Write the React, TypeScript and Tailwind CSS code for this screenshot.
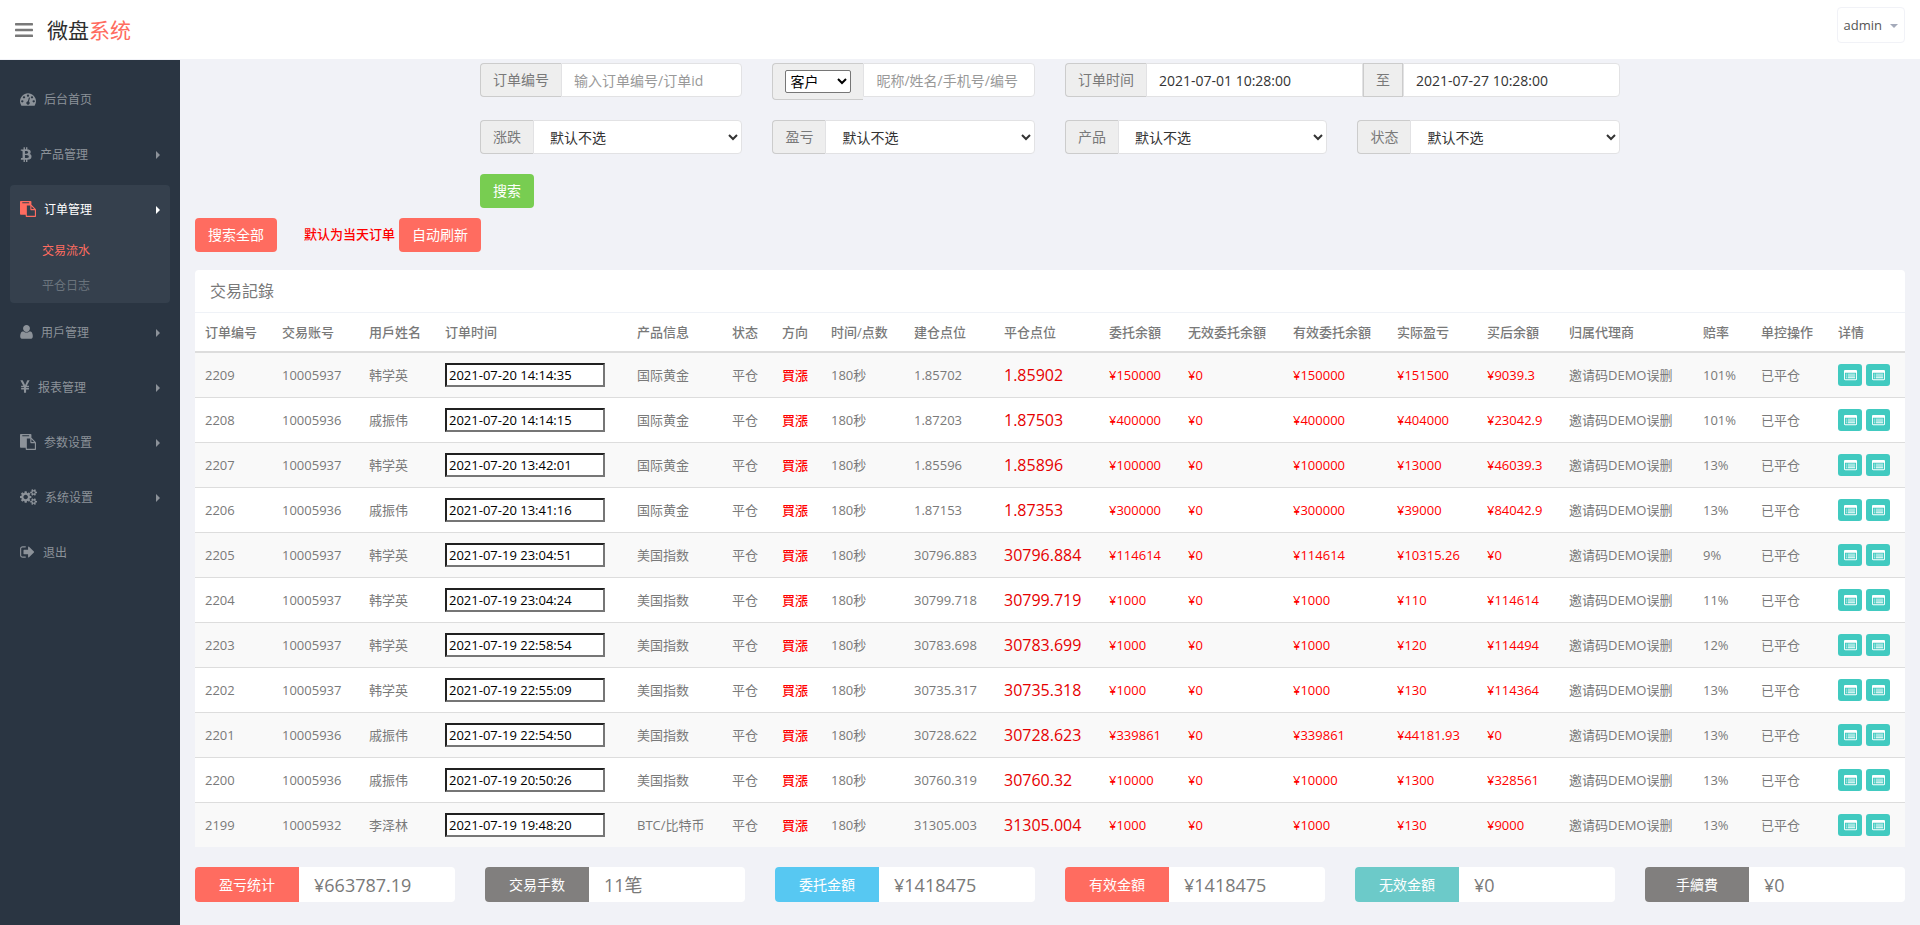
import { ReactNode } from "react";
import clsx from "clsx";

type IconProps = { className?: string };

function Glyph({ viewBox, d, className }: { viewBox: string; d: string; className?: string }) {
    return (
        <svg className={clsx("block fill-current", className)} viewBox={viewBox} aria-hidden="true">
            <path d={d} />
        </svg>
    );
}

function DashboardIcon({ className }: IconProps) {
    return (
        <Glyph
            className={className}
            viewBox="0 0 1792 1792"
            d="M384 1152q0-53-37.5-90.5t-90.5-37.5-90.5 37.5-37.5 90.5 37.5 90.5 90.5 37.5 90.5-37.5 37.5-90.5zm192-448q0-53-37.5-90.5t-90.5-37.5-90.5 37.5-37.5 90.5 37.5 90.5 90.5 37.5 90.5-37.5 37.5-90.5zm428 481l101-382q6-26-7.5-48.5t-38.5-29.5-48 6.5-30 39.5l-101 382q-60 5-107 43.5t-63 98.5q-20 77 20 146t117 89 146-20 89-117q16-60-6-117t-72-91zm660-33q0-53-37.5-90.5t-90.5-37.5-90.5 37.5-37.5 90.5 37.5 90.5 90.5 37.5 90.5-37.5 37.5-90.5zm-640-640q0-53-37.5-90.5t-90.5-37.5-90.5 37.5-37.5 90.5 37.5 90.5 90.5 37.5 90.5-37.5 37.5-90.5zm448 192q0-53-37.5-90.5t-90.5-37.5-90.5 37.5-37.5 90.5 37.5 90.5 90.5 37.5 90.5-37.5 37.5-90.5zm320 448q0 261-141 483-19 29-54 29h-1402q-35 0-54-29-141-221-141-483 0-182 71-348t191-286 286-191 348-71 348 71 286 191 191 286 71 348z"
        />
    );
}

function BtcIcon({ className }: IconProps) {
    return (
        <Glyph
            className={className}
            viewBox="0 0 1280 1792"
            d="M1167 640q18 182-131 258 117 28 175 103t45 214q-7 71-32.5 125t-64.5 89-97 58.5-121.5 34.5-145.5 15v255h-154v-251q-80 0-122-1v252h-154v-255q-18 0-54-.5t-55-.5h-200l31-183h111q50 0 58-51v-402h16q-6-1-16-1v-287q-13-68-89-68h-111v-164l212 1q64 0 97-1v-252h154v247q82-2 122-2v-245h154v252q79 7 140 22.5t113 45 82.5 78 36.5 114.5zm-215 545q0-36-15-64t-37-46-57.5-30.5-65.5-18.5-74-9-69-3-64.5 1-47.5 1v338q8 0 37 .5t48 .5 53-1.5 58.5-4 57-8.5 55.5-14 47.5-21 39.5-30 24.5-40 9.5-51zm-71-476q0-33-12.5-58.5t-30.5-42-48-28-55-16.5-61.5-8-58-2.5-54 1-39.5.5v307q5 0 34.5.5t46.5 0 50-2 55-5.5 51.5-11 48.5-18.5 37-27 27-38.5 9-51z"
        />
    );
}

function PasteIcon({ className }: IconProps) {
    return (
        <Glyph
            className={className}
            viewBox="0 0 1792 1792"
            d="M768 1664h896v-640h-416q-40 0-68-28t-28-68v-416h-384v1152zm256-1440v-64q0-13-9.5-22.5t-22.5-9.5h-704q-13 0-22.5 9.5t-9.5 22.5v64q0 13 9.5 22.5t22.5 9.5h704q13 0 22.5-9.5t9.5-22.5zm256 672h299l-299-299v299zm512 128v672q0 40-28 68t-68 28h-960q-40 0-68-28t-28-68v-160h-544q-40 0-68-28t-28-68v-1344q0-40 28-68t68-28h1088q40 0 68 28t28 68v328q21 13 36 28l408 408q28 28 48 76t20 88z"
        />
    );
}

function UserIcon({ className }: IconProps) {
    return (
        <Glyph
            className={className}
            viewBox="128 0 1408 1792"
            d="M1536 1399q0 120-73 189.5t-194 69.5h-874q-121 0-194-69.5t-73-189.5q0-53 3.5-103.5t14-109 26.5-108.5 43-97.5 62-81 85.5-53.5 111.5-20q9 0 42 21.5t74.5 48 108 48 133.5 21.5 133.5-21.5 108-48 74.5-48 42-21.5q61 0 111.5 20t85.5 53.5 62 81 43 97.5 26.5 108.5 14 109 3.5 103.5zm-320-893q0 159-112.5 271.5t-271.5 112.5-271.5-112.5-112.5-271.5 112.5-271.5 271.5-112.5 271.5 112.5 112.5 271.5z"
        />
    );
}

function YenIcon({ className }: IconProps) {
    return (
        <Glyph
            className={className}
            viewBox="382 0 1029 1792"
            d="M985.5 1536h-172q-13 0-22.5-9t-9.5-23v-330h-288q-13 0-22.5-9t-9.5-23v-103q0-13 9.5-22.5t22.5-9.5h288v-85h-288q-13 0-22.5-9t-9.5-23v-104q0-13 9.5-22.5t22.5-9.5h214l-321-578q-8-16 0-32 10-16 28-16h194q19 0 29 18l215 425q19 38 56 125 10-24 30.5-68t27.5-61l191-420q8-19 29-19h191q17 0 27 16 9 14 1 31l-313 579h215q13 0 22.5 9.5t9.5 22.5v104q0 14-9.5 23t-22.5 9h-290v85h290q13 0 22.5 9.5t9.5 22.5v103q0 14-9.5 23t-22.5 9h-290v330q0 13-9.5 22.5t-22.5 9.5z"
        />
    );
}

function CogsIcon({ className }: IconProps) {
    return (
        <Glyph
            className={className}
            viewBox="0 0 1920 1792"
            d="M896 896q0-106-75-181t-181-75-181 75-75 181 75 181 181 75 181-75 75-181zm768 512q0-52-38-90t-90-38-90 38-38 90q0 53 37.5 90.5t90.5 37.5 90.5-37.5 37.5-90.5zm0-1024q0-52-38-90t-90-38-90 38-38 90q0 53 37.5 90.5t90.5 37.5 90.5-37.5 37.5-90.5zm-384 421v185q0 10-7 19.5t-16 10.5l-155 24q-11 35-32 76 34 48 90 115 7 11 7 20 0 12-7 19-23 30-82.5 89.5t-78.5 59.5q-11 0-21-7l-115-90q-37 19-77 31-11 108-23 155-7 24-30 24h-186q-11 0-20-7.5t-10-17.5l-23-153q-34-10-75-31l-118 89q-7 7-20 7-11 0-21-8-144-133-144-160 0-9 7-19 10-14 41-53t47-61q-23-44-35-82l-152-24q-10-1-17-9.5t-7-19.5v-185q0-10 7-19.5t16-10.5l155-24q11-35 32-76-34-48-90-115-7-11-7-20 0-12 7-20 22-30 82-89t79-59q11 0 21 7l115 90q34-18 77-32 11-108 23-154 7-24 30-24h186q11 0 20 7.5t10 17.5l23 153q34 10 75 31l118-89q8-7 20-7 11 0 21 8 144 133 144 160 0 8-7 19-12 16-42 54t-45 60q23 48 34 82l152 23q10 2 17 10.5t7 19.5zm640 533v140q0 16-149 31-12 27-30 52 51 113 51 138 0 4-4 7-122 71-124 71-8 0-46-47t-52-68q-20 2-30 2t-30-2q-14 21-52 68t-46 47q-2 0-124-71-4-3-4-7 0-25 51-138-18-25-30-52-149-15-149-31v-140q0-16 149-31 13-29 30-52-51-113-51-138 0-4 4-7 4-2 35-20t59-34 30-16q8 0 46 46.5t52 67.5q20-2 30-2t30 2q51-71 92-112l6-2q4 0 124 70 4 3 4 7 0 25-51 138 17 23 30 52 149 15 149 31zm0-1024v140q0 16-149 31-12 27-30 52 51 113 51 138 0 4-4 7-122 71-124 71-8 0-46-47t-52-68q-20 2-30 2t-30-2q-14 21-52 68t-46 47q-2 0-124-71-4-3-4-7 0-25 51-138-18-25-30-52-149-15-149-31v-140q0-16 149-31 13-29 30-52-51-113-51-138 0-4 4-7 4-2 35-20t59-34 30-16q8 0 46 46.5t52 67.5q20-2 30-2t30 2q51-71 92-112l6-2q4 0 124 70 4 3 4 7 0 25-51 138 17 23 30 52 149 15 149 31z"
        />
    );
}

function SignOutIcon({ className }: IconProps) {
    return (
        <Glyph
            className={className}
            viewBox="64 0 1664 1792"
            d="M704 1440q0 4 1 20t.5 26.5-3 23.5-10 19.5-20.5 6.5h-320q-119 0-203.5-84.5t-84.5-203.5v-704q0-119 84.5-203.5t203.5-84.5h320q13 0 22.5 9.5t9.5 22.5q0 4 1 20t.5 26.5-3 23.5-10 19.5-20.5 6.5h-320q-66 0-113 47t-47 113v704q0 66 47 113t113 47h312l11.5 1 11.5 3 8 5.5 7 9 2 13.5zm928-544q0 26-19 45l-544 544q-19 19-45 19t-45-19-19-45v-288h-448q-26 0-45-19t-19-45v-384q0-26 19-45t45-19h448v-288q0-26 19-45t45-19 45 19l544 544q19 19 19 45z"
        />
    );
}

function ListIcon({ className }: IconProps) {
    return (
        <Glyph
            className={className}
            viewBox="0 0 1792 1792"
            d="M384 1184v64q0 13-9.5 22.5t-22.5 9.5h-64q-13 0-22.5-9.5t-9.5-22.5v-64q0-13 9.5-22.5t22.5-9.5h64q13 0 22.5 9.5t9.5 22.5zm0-256v64q0 13-9.5 22.5t-22.5 9.5h-64q-13 0-22.5-9.5t-9.5-22.5v-64q0-13 9.5-22.5t22.5-9.5h64q13 0 22.5 9.5t9.5 22.5zm0-256v64q0 13-9.5 22.5t-22.5 9.5h-64q-13 0-22.5-9.5t-9.5-22.5v-64q0-13 9.5-22.5t22.5-9.5h64q13 0 22.5 9.5t9.5 22.5zm1152 512v64q0 13-9.5 22.5t-22.5 9.5h-960q-13 0-22.5-9.5t-9.5-22.5v-64q0-13 9.5-22.5t22.5-9.5h960q13 0 22.5 9.5t9.5 22.5zm0-256v64q0 13-9.5 22.5t-22.5 9.5h-960q-13 0-22.5-9.5t-9.5-22.5v-64q0-13 9.5-22.5t22.5-9.5h960q13 0 22.5 9.5t9.5 22.5zm0-256v64q0 13-9.5 22.5t-22.5 9.5h-960q-13 0-22.5-9.5t-9.5-22.5v-64q0-13 9.5-22.5t22.5-9.5h960q13 0 22.5 9.5t9.5 22.5zm128 704v-832q0-13-9.5-22.5t-22.5-9.5h-1472q-13 0-22.5 9.5t-9.5 22.5v832q0 13 9.5 22.5t22.5 9.5h1472q13 0 22.5-9.5t9.5-22.5zm128-1088v1088q0 66-47 113t-113 47h-1472q-66 0-113-47t-47-113v-1088q0-66 47-113t113-47h1472q66 0 113 47t47 113z"
        />
    );
}

function Header() {
    return (
        <header className="flex h-[60px] items-center border-b border-[#f1f2f7] bg-white px-[15px]">
            <button type="button" aria-label="菜单" className="text-[#797979]">
                <svg className="block h-[14px] w-[18px] fill-current" viewBox="0 0 18 14" aria-hidden="true">
                    <rect width="18" height="2.4" rx="0.6" />
                    <rect y="5.8" width="18" height="2.4" rx="0.6" />
                    <rect y="11.6" width="18" height="2.4" rx="0.6" />
                </svg>
            </button>
            <a href="#" className="ml-[14px] text-[21px] leading-7 text-[#2e2e2e]">
                微盘<span className="text-[#ff6c60]">系统</span>
            </a>
            <button
                type="button"
                className="mb-2.5 ml-auto flex h-9 items-center gap-2 rounded border border-[#f1f2f7] px-1.5 pt-0.5 text-[13px] text-[#555]"
            >
                admin
                <svg className="block h-1 w-2 fill-[#a4aaba]" viewBox="0 0 8 4" aria-hidden="true">
                    <path d="M0 0h8L4 4z" />
                </svg>
            </button>
        </header>
    );
}

function MenuItem({
    icon,
    label,
    arrow = true,
    active = false,
}: {
    icon: ReactNode;
    label: string;
    arrow?: boolean;
    active?: boolean;
}) {
    return (
        <a href="#" className={clsx("flex h-[50px] items-center px-2.5", active ? "text-white" : "text-[#8c9299]")}>
            <span className={clsx("mb-0.5 mr-2", active && "text-[#ff6c60]")}>{icon}</span>
            {label}
            {arrow && (
                <svg className="ml-auto block h-2 w-1 fill-current" viewBox="0 0 4 8" aria-hidden="true">
                    <path d="M0 0l4 4-4 4z" />
                </svg>
            )}
        </a>
    );
}

function Sidebar() {
    return (
        <nav className="flex w-[180px] shrink-0 flex-col gap-[5px] bg-[#2a3542] px-2.5 pt-[15px] text-xs">
            <MenuItem icon={<DashboardIcon className="h-4 w-4" />} label="后台首页" arrow={false} />
            <MenuItem icon={<BtcIcon className="h-4 w-3" />} label="产品管理" />
            <div className="rounded bg-[#35404d]">
                <MenuItem icon={<PasteIcon className="h-4 w-4" />} label="订单管理" active />
                <ul className="-mt-0.5 pl-8 leading-[35px]">
                    <li>
                        <a href="#" className="block text-[#ff6c60]">交易流水</a>
                    </li>
                    <li>
                        <a href="#" className="block text-[#6b747d]">平仓日志</a>
                    </li>
                </ul>
            </div>
            <MenuItem icon={<UserIcon className="h-4 w-[13px]" />} label="用戶管理" />
            <MenuItem icon={<YenIcon className="h-4 w-2.5" />} label="报表管理" />
            <MenuItem icon={<PasteIcon className="h-4 w-4" />} label="参数设置" />
            <MenuItem icon={<CogsIcon className="h-4 w-[17px]" />} label="系统设置" />
            <MenuItem icon={<SignOutIcon className="h-4 w-[15px]" />} label="退出" arrow={false} />
        </nav>
    );
}

const addon = "flex h-[34px] shrink-0 items-center rounded-l border border-r-0 border-[#ccc] bg-[#eee] px-3 text-[#797979]";
const control = "h-[34px] min-w-0 flex-1 border border-[#e2e2e4] bg-white text-[#333] placeholder:text-[#999]";

function SelectGroup({ id, label }: { id: string; label: string }) {
    return (
        <div className="flex">
            <label htmlFor={id} className={addon}>{label}</label>
            <select id={id} className={clsx(control, "rounded-r pl-3 pr-1")}>
                <option>默认不选</option>
            </select>
        </div>
    );
}

function SearchForm() {
    return (
        <form className="mx-auto w-2/3 text-sm">
            <div className="grid grid-cols-4 gap-x-[30px]">
                <div className="flex h-[57px] items-start">
                    <label htmlFor="oid" className={addon}>订单编号</label>
                    <input id="oid" className={clsx(control, "rounded-r px-3")} placeholder="输入订单编号/订单id" />
                </div>
                <div className="flex items-start">
                    <div className="flex h-[37px] shrink-0 items-center rounded-l border border-r-0 border-[#ccc] bg-[#eee] px-3">
                        <select aria-label="用户类型" className="h-[23px] w-[66px] rounded-xs border border-[#767676] bg-white text-black">
                            <option>客户</option>
                        </select>
                    </div>
                    <input
                        aria-label="用户"
                        className={clsx(control, "rounded-r px-3")}
                        placeholder="昵称/姓名/手机号/编号"
                    />
                </div>
                <div className="col-span-2 flex items-start">
                    <label htmlFor="start" className={addon}>订单时间</label>
                    <input id="start" className={clsx(control, "px-3")} defaultValue="2021-07-01 10:28:00" />
                    <label
                        htmlFor="end"
                        className="flex h-[34px] shrink-0 items-center border border-[#ccc] bg-[#eee] px-3 text-[#797979]"
                    >
                        至
                    </label>
                    <input id="end" className={clsx(control, "rounded-r px-3")} defaultValue="2021-07-27 10:28:00" />
                </div>
                <SelectGroup id="trend" label="涨跌" />
                <SelectGroup id="profit" label="盈亏" />
                <SelectGroup id="product" label="产品" />
                <SelectGroup id="status" label="状态" />
            </div>
            <button type="button" className="mt-5 block h-[34px] rounded bg-[#78cd51] px-[13px] text-white">
                搜索
            </button>
        </form>
    );
}

const columns = [
    { title: "订单编号", width: "w-[77px]" },
    { title: "交易账号", width: "w-[87px]" },
    { title: "用戶姓名", width: "w-[76px]" },
    { title: "订单时间", width: "w-[192px]" },
    { title: "产品信息", width: "w-[95px]" },
    { title: "状态", width: "w-[50px]" },
    { title: "方向", width: "w-[49px]" },
    { title: "时间/点数", width: "w-[83px]" },
    { title: "建仓点位", width: "w-[90px]" },
    { title: "平仓点位", width: "w-[105px]" },
    { title: "委托余額", width: "w-[79px]" },
    { title: "无效委托余額", width: "w-[105px]" },
    { title: "有效委托余額", width: "w-[104px]" },
    { title: "实际盈亏", width: "w-[90px]" },
    { title: "买后余額", width: "w-[82px]" },
    { title: "归属代理商", width: "w-[134px]" },
    { title: "赔率", width: "w-[58px]" },
    { title: "单控操作", width: "w-[77px]" },
    { title: "详情", width: "w-[77px]" },
];

// id, account, name, time, product, open, close, amount, profit, balance, odds
const orders = [
    ["2209", "10005937", "韩学英", "2021-07-20 14:14:35", "国际黄金", "1.85702", "1.85902", "150000", "151500", "9039.3", "101%"],
    ["2208", "10005936", "戚振伟", "2021-07-20 14:14:15", "国际黄金", "1.87203", "1.87503", "400000", "404000", "23042.9", "101%"],
    ["2207", "10005937", "韩学英", "2021-07-20 13:42:01", "国际黄金", "1.85596", "1.85896", "100000", "13000", "46039.3", "13%"],
    ["2206", "10005936", "戚振伟", "2021-07-20 13:41:16", "国际黄金", "1.87153", "1.87353", "300000", "39000", "84042.9", "13%"],
    ["2205", "10005937", "韩学英", "2021-07-19 23:04:51", "美国指数", "30796.883", "30796.884", "114614", "10315.26", "0", "9%"],
    ["2204", "10005937", "韩学英", "2021-07-19 23:04:24", "美国指数", "30799.718", "30799.719", "1000", "110", "114614", "11%"],
    ["2203", "10005937", "韩学英", "2021-07-19 22:58:54", "美国指数", "30783.698", "30783.699", "1000", "120", "114494", "12%"],
    ["2202", "10005937", "韩学英", "2021-07-19 22:55:09", "美国指数", "30735.317", "30735.318", "1000", "130", "114364", "13%"],
    ["2201", "10005936", "戚振伟", "2021-07-19 22:54:50", "美国指数", "30728.622", "30728.623", "339861", "44181.93", "0", "13%"],
    ["2200", "10005936", "戚振伟", "2021-07-19 20:50:26", "美国指数", "30760.319", "30760.32", "10000", "1300", "328561", "13%"],
    ["2199", "10005932", "李泽林", "2021-07-19 19:48:20", "BTC/比特币", "31305.003", "31305.004", "1000", "130", "9000", "13%"],
];

function Cell({ children, className }: { children: ReactNode; className?: string }) {
    return <td className={clsx("pl-2.5", className)}>{children}</td>;
}

function DetailButton({ label }: { label: string }) {
    return (
        <button
            type="button"
            aria-label={label}
            className="flex h-[22px] w-6 items-center justify-center rounded-[3px] bg-[#41cac0] text-white"
        >
            <ListIcon className="h-[13px] w-[13px]" />
        </button>
    );
}

function OrderTable() {
    return (
        <table className="w-full table-fixed border-separate border-spacing-0 whitespace-nowrap text-left text-[13px] leading-5">
            <thead>
                <tr className="h-10">
                    {columns.map((column) => (
                        <th
                            key={column.title}
                            className={clsx("border-b-2 border-[#ddd] pl-2.5 font-medium", column.width)}
                        >
                            {column.title}
                        </th>
                    ))}
                </tr>
            </thead>
            <tbody className="[&>tr+tr>td]:border-t [&>tr+tr>td]:border-[#ddd]">
                {orders.map(([id, account, name, time, product, open, close, amount, profit, balance, odds]) => (
                    <tr key={id} className="h-[45px] odd:bg-[#f9f9f9] first:h-11">
                        <Cell>{id}</Cell>
                        <Cell>{account}</Cell>
                        <Cell>{name}</Cell>
                        <Cell>
                            <input
                                aria-label="订单时间"
                                defaultValue={time}
                                className="block h-6 w-40 border-2 border-b-[#767676] border-l-[#212121] border-r-[#767676] border-t-[#212121] bg-white px-0.5 text-black"
                            />
                        </Cell>
                        <Cell>{product}</Cell>
                        <Cell>平仓</Cell>
                        <Cell className="font-medium text-[#f00]">買漲</Cell>
                        <Cell>180秒</Cell>
                        <Cell>{open}</Cell>
                        <Cell className="text-base text-[#e60000]">{close}</Cell>
                        <Cell className="text-[#f00]">¥{amount}</Cell>
                        <Cell className="text-[#f00]">¥0</Cell>
                        <Cell className="text-[#f00]">¥{amount}</Cell>
                        <Cell className="text-[#f00]">¥{profit}</Cell>
                        <Cell className="text-[#f00]">¥{balance}</Cell>
                        <Cell>邀请码DEMO误删</Cell>
                        <Cell>{odds}</Cell>
                        <Cell>已平仓</Cell>
                        <Cell>
                            <div className="flex gap-1">
                                <DetailButton label="订单详情" />
                                <DetailButton label="用户详情" />
                            </div>
                        </Cell>
                    </tr>
                ))}
            </tbody>
        </table>
    );
}

const totals = [
    { label: "盈亏统计", value: "¥663787.19", color: "bg-[#ff6c60]" },
    { label: "交易手数", value: "11笔", color: "bg-[#817f7e]" },
    { label: "委托金額", value: "¥1418475", color: "bg-[#57c8f2]" },
    { label: "有效金額", value: "¥1418475", color: "bg-[#ff6c60]" },
    { label: "无效金額", value: "¥0", color: "bg-[#6ccac9]" },
    { label: "手續費", value: "¥0", color: "bg-[#817f7e]" },
];

function Totals() {
    return (
        <div className="mt-5 grid grid-cols-6 gap-[30px]">
            {totals.map((total) => (
                <div key={total.label} className="flex h-[35px] items-center overflow-hidden rounded bg-white">
                    <div className={clsx("flex h-full w-2/5 items-center justify-center text-sm text-white", total.color)}>
                        {total.label}
                    </div>
                    <div className="pl-[15px] text-lg">{total.value}</div>
                </div>
            ))}
        </div>
    );
}

export default function App() {
    return (
        <div className="flex min-h-screen flex-col bg-[#f1f2f7] font-['Open_Sans','Noto_Sans_CJK_SC',sans-serif] text-[#797979]">
            <Header />
            <div className="flex flex-1">
                <Sidebar />
                <main className="min-w-0 flex-1 px-[15px] pb-5 pt-[3px]">
                    <SearchForm />
                    <div className="mt-2.5 flex items-center text-sm">
                        <button type="button" className="h-[34px] rounded bg-[#ff6c60] px-[13px] text-white">
                            搜索全部
                        </button>
                        <span className="mb-0.5 ml-[27px] mr-1 text-[13px] font-medium text-[#f00]">默认为当天订单</span>
                        <button type="button" className="h-[34px] rounded bg-[#ff6c60] px-[13px] text-white">
                            自动刷新
                        </button>
                    </div>
                    <section className="mt-[18px] overflow-hidden rounded-t bg-white">
                        <h2 className="h-[43px] border-b border-[#eff2f7] pl-[15px] text-base leading-[42px]">
                            交易記錄
                        </h2>
                        <OrderTable />
                    </section>
                    <Totals />
                </main>
            </div>
        </div>
    );
}
